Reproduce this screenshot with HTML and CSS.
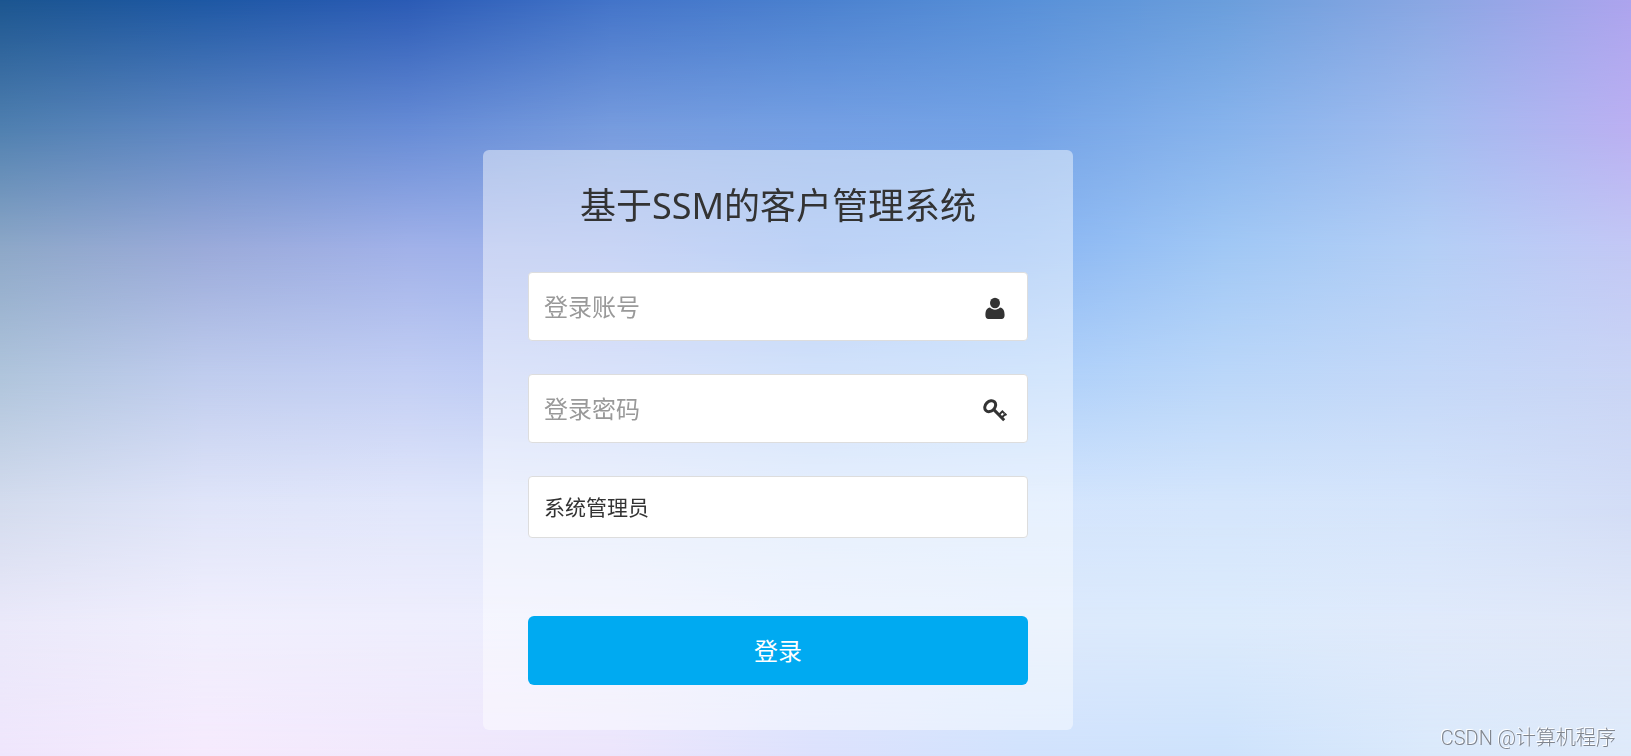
FILE: index.html
```html
<!DOCTYPE html>
<html lang="zh-CN">
<head>
    <meta charset="UTF-8">
    <meta name="viewport" content="width=device-width, initial-scale=1.0">
    <title>基于SSM的客户管理系统</title>
    <link rel="stylesheet" href="styles.css">
</head>
<body>
    <!-- soft colour background, each band fades into the next -->
    <div class="sky" aria-hidden="true">
        <div class="band band-1"></div>
        <div class="band band-2"></div>
        <div class="band band-3"></div>
        <div class="band band-4"></div>
        <div class="band band-5"></div>
        <div class="band band-6"></div>
        <div class="band band-7"></div>
    </div>

    <main class="page">
        <form class="login-box" action="#" method="post">
            <h1 class="title">基于SSM的客户管理系统</h1>

            <div class="field">
                <input class="control" type="text" name="username" placeholder="登录账号" aria-label="登录账号">
                <svg class="icon" viewBox="0 0 24 24" aria-hidden="true">
                    <ellipse cx="12" cy="7" rx="5" ry="5.3"/>
                    <path d="M7 11.5C8.4 12.9 10 13.7 12 13.7s3.6-.8 5-2.2c3.2.4 4.6 3.2 4.6 7.5 0 2.4-1.2 4-3 4H5.4c-1.8 0-3-1.6-3-4 0-4.3 1.4-7.1 4.6-7.5z"/>
                </svg>
            </div>

            <div class="field">
                <input class="control" type="password" name="password" placeholder="登录密码" aria-label="登录密码">
                <svg class="icon icon-line" viewBox="0 0 24 24" aria-hidden="true">
                    <ellipse cx="7.2" cy="8.2" rx="6.1" ry="4.7" transform="rotate(-45 7.2 8.2)"/>
                    <path d="M10.8 11.6l10.4 10.6"/>
                    <path class="teeth" d="M16 16.8l3.4-3.4 2 2M18.9 19.5l3.4-3.4 1.2 1.2"/>
                </svg>
            </div>

            <select class="control role" name="role" aria-label="角色">
                <option>系统管理员</option>
            </select>

            <button class="submit" type="submit">登录</button>
        </form>
    </main>

    <div class="watermark">CSDN @计算机程序</div>
</body>
</html>
```

FILE: styles.css
```css
* {
    box-sizing: border-box;
}
body {
    margin: 0;
    min-height: 100vh;
    font-family: "Noto Sans", "Noto Sans CJK SC", sans-serif;
    color: #333;
}

/* background */
.sky {
    position: fixed;
    inset: 0;
    z-index: -1;
    display: grid;
}
.band {
    grid-area: 1 / 1;
}
.band-1 {
    background: linear-gradient(90deg, #1c5590, #1e58a4, #2b5bb5, #4374c9, #4b81cf, #5890d8, #6a9edc, #8aa7e3, #ada4ee);
}
.band-2 {
    background: linear-gradient(90deg, #5080b0, #5f87c4, #678cd6, #779cde, #75a0e4, #74a3e6, #87b3ec, #a1bcef, #bbb0f2);
    mask-image: linear-gradient(transparent, #000 17%);
}
.band-3 {
    background: linear-gradient(90deg, #8ea8c8, #9babda, #a2b2e9, #9cb2ed, #88aeef, #8ab6f3, #a1c8f5, #b4cff6, #c3c8f5);
    mask-image: linear-gradient(transparent 17%, #000 33%);
}
.band-4 {
    background: linear-gradient(90deg, #b0c5dc, #c0cdee, #c3cff4, #bacaf6, #adcaf7, #aed0fa, #bbd7f9, #c4d8f8, #cad5f5);
    mask-image: linear-gradient(transparent 33%, #000 50%);
}
.band-5 {
    background: linear-gradient(90deg, #d4dcee, #e0e5f9, #e2e7fb, #dde7fb, #d4e4fc, #d4e5fd, #d5e6fc, #d6e5fb, #d3ddf6);
    mask-image: linear-gradient(transparent 50%, #000 67%);
}
.band-6 {
    background: linear-gradient(90deg, #ebe9fa, #f1effd, #efeefd, #ebedfd, #e2ebfd, #dce9fc, #dcebfc, #e0eafb, #e1e8f8);
    mask-image: linear-gradient(transparent 67%, #000 83%);
}
.band-7 {
    background: linear-gradient(90deg, #efe6fc, #f5eafd, #f1e8fc, #ece5fc, #dce1fd, #d1e2fd, #cde2fc, #dae9fb, #deeafa);
    mask-image: linear-gradient(transparent 83%, #000);
}

/* login form */
.page {
    display: flex;
    justify-content: center;
    padding: 150px 75px 26px 0;
}
.login-box {
    display: flex;
    flex-direction: column;
    width: 100%;
    max-width: 590px;
    padding: 31px 45px 45px;
    border-radius: 6px;
    background: rgba(255, 255, 255, 0.45);
}
.title {
    margin: 0 0 41px;
    font-size: 36px;
    font-weight: 400;
    line-height: 50px;
    text-align: center;
}
.field {
    position: relative;
    margin-bottom: 33px;
}
.control {
    display: block;
    width: 100%;
    height: 69px;
    padding: 0 60px 0 15px;
    border: 1px solid #ddd;
    border-radius: 4px;
    background: #fff;
    font-family: inherit;
    font-size: 24px;
    color: #333;
}
.control::placeholder {
    color: #999;
    opacity: 1;
}
.icon {
    position: absolute;
    top: 24px;
    right: 21px;
    width: 24px;
    height: 24px;
    fill: #333;
}
.icon-line {
    fill: none;
    stroke: #333;
    stroke-width: 3;
}
.teeth {
    stroke-width: 2;
}
.role {
    appearance: none;
    height: 62px;
    padding: 0 15px;
    font-size: 21px;
}
.submit {
    height: 69px;
    margin-top: 78px;
    padding: 0 0 3px;
    border: 0;
    border-radius: 6px;
    background: #00aaf1;
    font-family: inherit;
    font-size: 24px;
    color: #fff;
    cursor: pointer;
}
.watermark {
    position: fixed;
    right: 15px;
    bottom: 4px;
    font-family: Roboto, "Noto Sans CJK SC", sans-serif;
    font-size: 20px;
    font-weight: 300;
    line-height: 28px;
    color: #80858e;
    text-shadow: -1px -1px 0 #fff;
}
```
